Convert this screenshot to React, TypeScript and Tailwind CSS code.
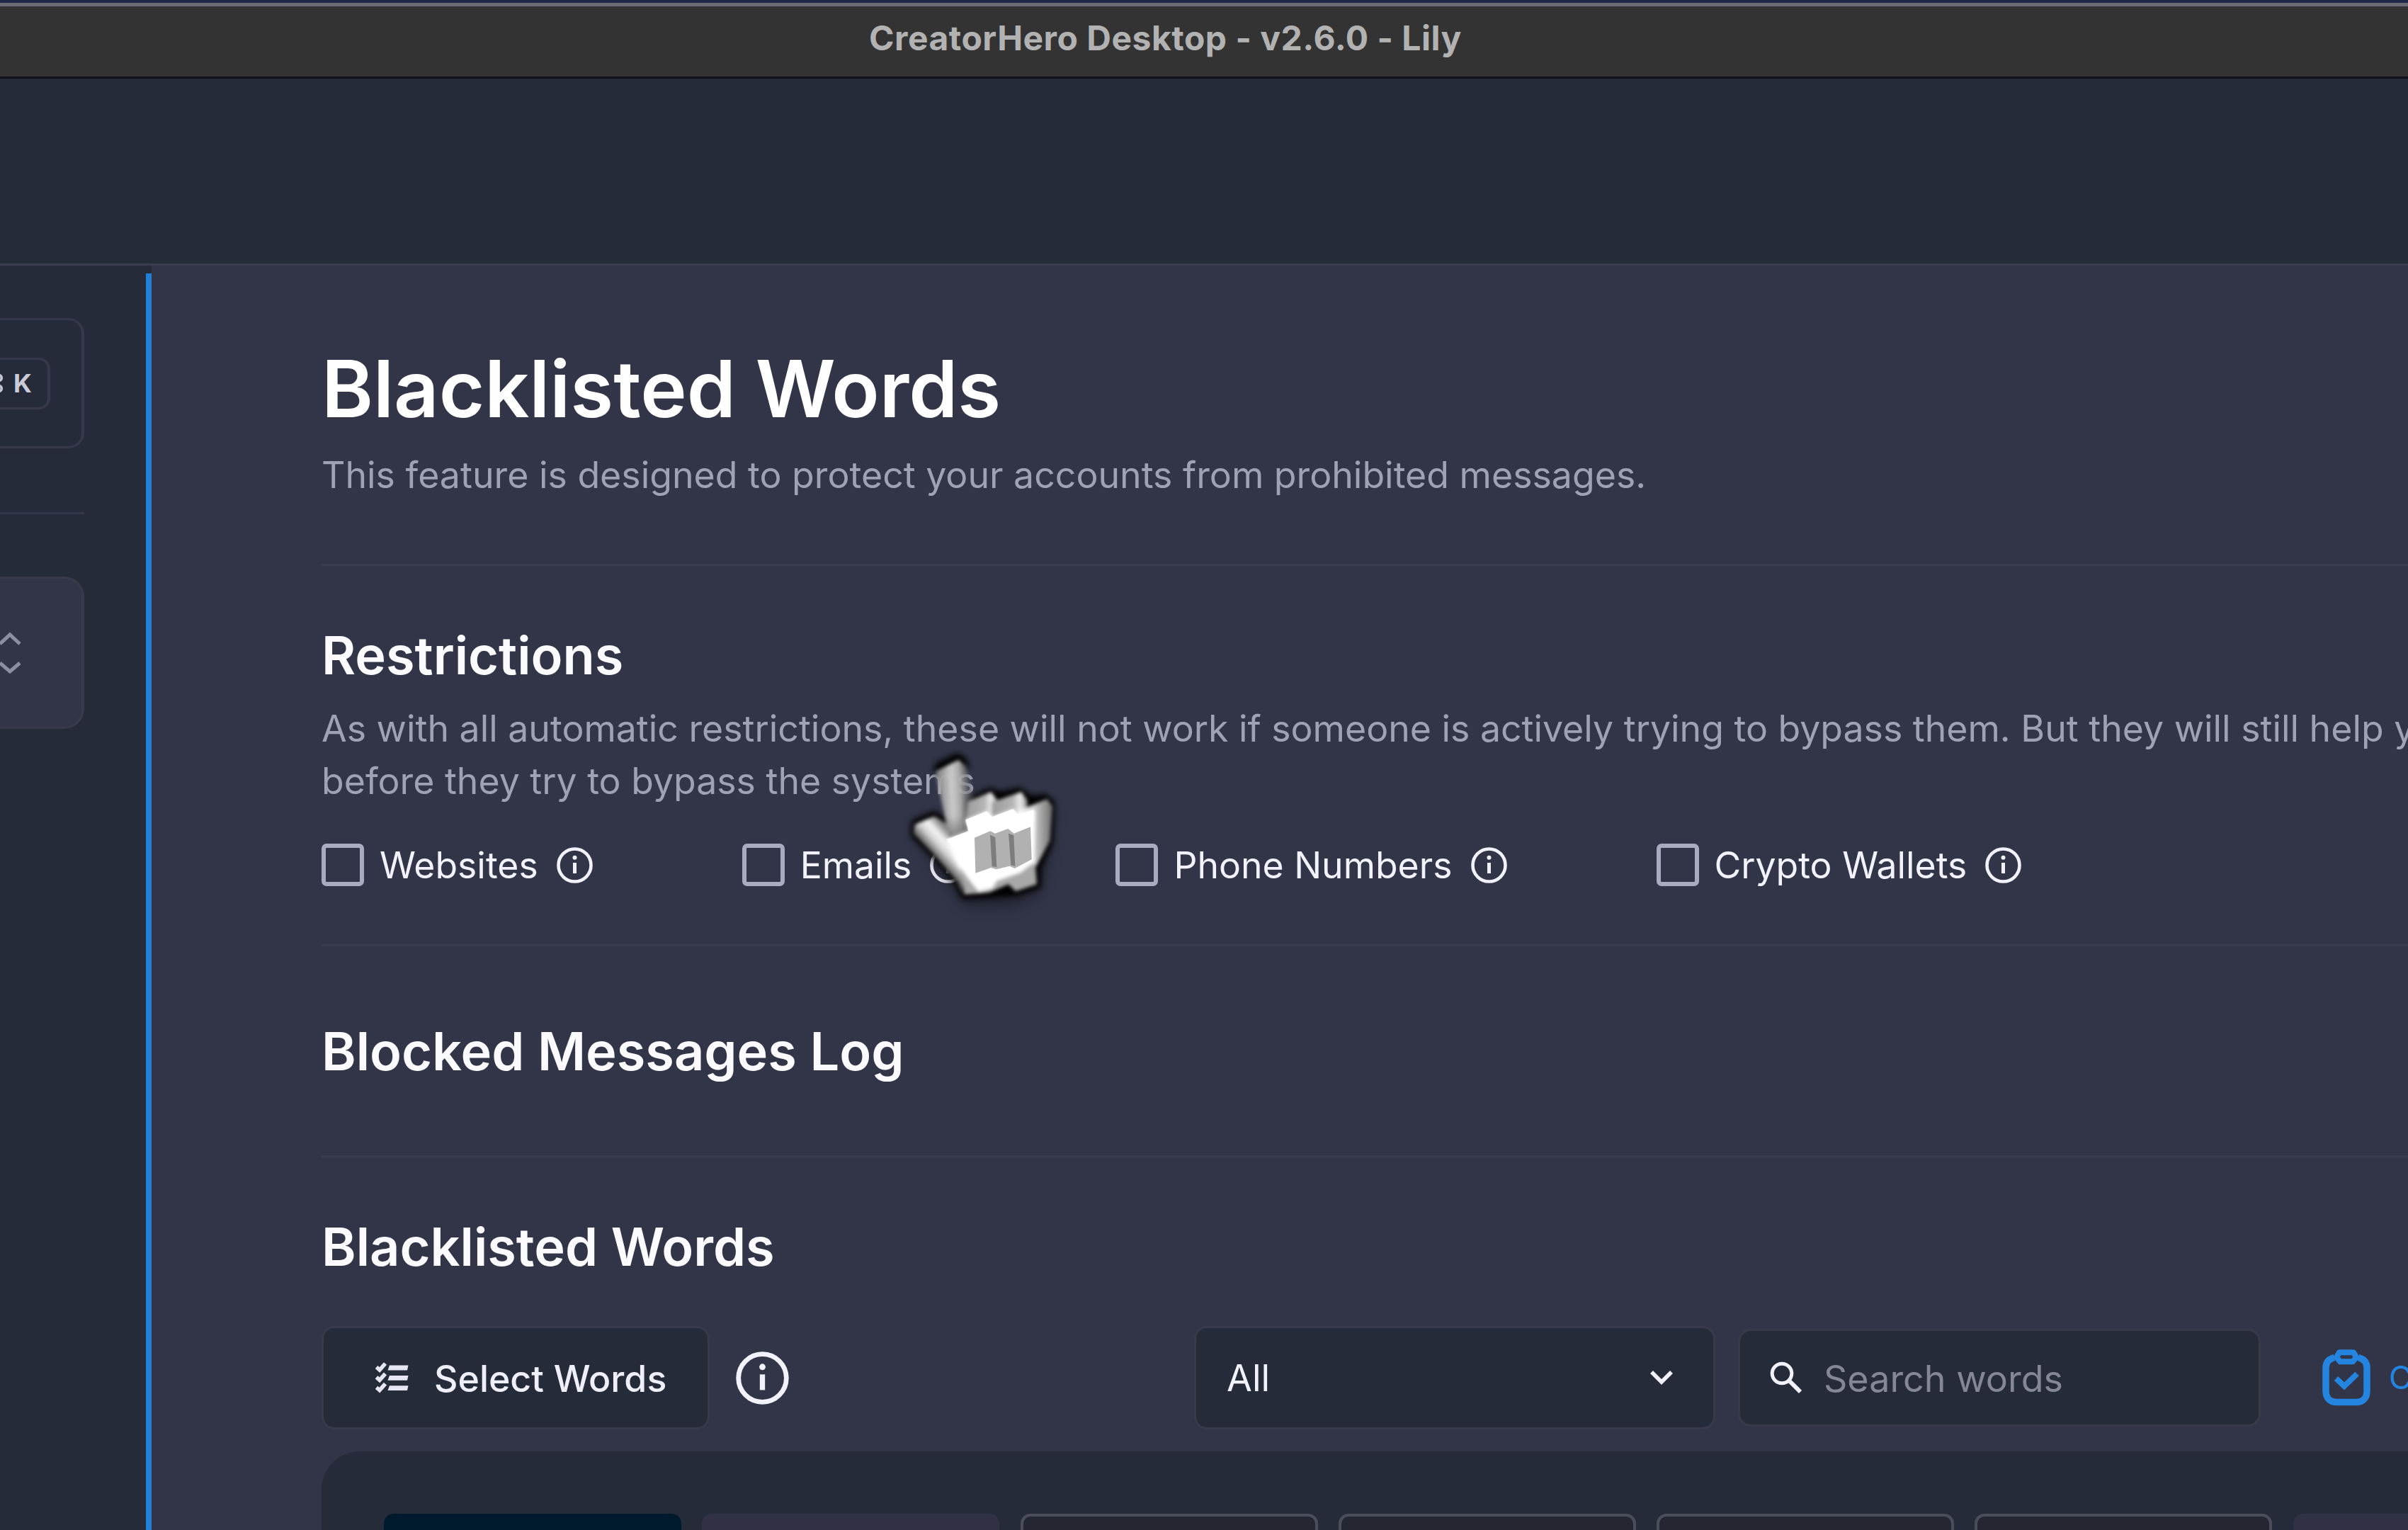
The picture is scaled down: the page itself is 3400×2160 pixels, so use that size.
import React from "react";
import { Command } from "lucide-react";
import { clsx } from "clsx";

interface IconProps {
  className?: string;
}

const restrictions = ["Websites", "Emails", "Phone Numbers", "Crypto Wallets"];

// one entry per word chip, only the top edge of the grid is in view
const chips = ["selected", "muted", "outlined", "outlined", "outlined", "outlined", "muted"];

const InfoIcon: React.FC<IconProps> = ({ className }) => (
  <svg viewBox="0 0 51 51" fill="none" className={clsx("shrink-0 text-[#f1f2fc]", className)}>
    <circle cx="25.5" cy="25.5" r="23" stroke="currentColor" strokeWidth="4.6" />
    <path d="M25.5 22v15" stroke="currentColor" strokeWidth="5" />
    <circle cx="25.5" cy="14.8" r="3" fill="currentColor" />
  </svg>
);

const ChecklistIcon: React.FC<IconProps> = ({ className }) => (
  <svg viewBox="0 0 47 44" fill="none" stroke="#e6e7f2" className={className}>
    {[8, 22.3, 36.7].map((y) => (
      <g key={y} transform={`translate(0 ${y})`}>
        <path d="M1.5 -1 6 3 14 -6" strokeWidth="5.5" />
        <path d="M20 -3.4H46.5L45 3.4H17.5Z" fill="#e6e7f2" stroke="none" />
      </g>
    ))}
  </svg>
);

const ClipboardIcon: React.FC<IconProps> = ({ className }) => (
  <svg viewBox="0 0 68 82" fill="none" stroke="#2385e0" strokeWidth="9.5" className={className}>
    <path d="M17 12.5C9.5 14.5 5 19 5 27V60C5 69.5 11 75.5 20 75.5H48C57 75.5 63 69.5 63 60V27C63 19 58.5 14.5 51 12.5" />
    <path d="M24 5.3H44L48 12 43 18.3H25L20 12Z" strokeWidth="8" strokeLinejoin="round" />
    <path d="M19.5 42 31 53 49 35.5" strokeWidth="8" />
  </svg>
);

const Cursor: React.FC = () => (
  <svg
    viewBox="0 0 900 840"
    className="absolute left-[1240px] top-[1030px] w-[300px] h-[280px] overflow-visible"
  >
    <defs>
      <linearGradient id="finger" x1="0" x2="1" y1="0.1" y2="0">
        <stop offset="0" stopColor="#8e8e8e" stopOpacity="0.85" />
        <stop offset="0.4" stopColor="#cccccc" />
        <stop offset="0.62" stopColor="#adadad" stopOpacity="0.95" />
        <stop offset="0.85" stopColor="#6a6a6a" stopOpacity="0.5" />
        <stop offset="1" stopColor="#4a4a4a" stopOpacity="0.1" />
      </linearGradient>
      <linearGradient id="fingerBase" x1="0" x2="0" y1="0" y2="1">
        <stop offset="0.55" stopColor="#444" stopOpacity="0" />
        <stop offset="1" stopColor="#555" stopOpacity="0.65" />
      </linearGradient>
      <linearGradient id="thumb" gradientUnits="userSpaceOnUse" x1="190" y1="510" x2="290" y2="420">
        <stop offset="0" stopColor="#4c4c4c" stopOpacity="0.7" />
        <stop offset="0.45" stopColor="#d2d2d2" />
        <stop offset="0.7" stopColor="#f4f4f4" />
        <stop offset="1" stopColor="#7d7d7d" />
      </linearGradient>
      <linearGradient id="side" x1="0" x2="1" y1="0" y2="0">
        <stop offset="0" stopColor="#fff" />
        <stop offset="0.4" stopColor="#d6d6d6" />
        <stop offset="1" stopColor="#6c6c6c" />
      </linearGradient>
      <linearGradient id="knuckle" x1="0" x2="1" y1="0" y2="0">
        <stop offset="0" stopColor="#9b9b9b" />
        <stop offset="0.6" stopColor="#b5b5b5" />
        <stop offset="0.8" stopColor="#eeeeee" />
        <stop offset="1" stopColor="#8a8a8a" />
      </linearGradient>
      <filter id="soft">
        <feGaussianBlur stdDeviation="8" />
      </filter>
      <filter id="shade" x="-30%" y="-30%" width="160%" height="160%">
        <feGaussianBlur stdDeviation="13" />
      </filter>
      <filter id="drop" x="-30%" y="-30%" width="160%" height="160%">
        <feGaussianBlur stdDeviation="30" />
      </filter>
    </defs>

    {/* shadow under the hand */}
    <path
      d="M150 420 250 370 340 470 460 380 740 330 728 500 680 700 560 750 370 750 230 560Z"
      fill="#000"
      opacity="0.35"
      filter="url(#drop)"
    />
    <g fill="#000" filter="url(#shade)">
      <path d="M232 180 245 140 335 98 372 120 390 165 340 160 260 200Z" />
      <path d="M380 290 470 246 520 262 600 244 650 280 710 272 748 305 740 480 690 585 690 670 580 705 470 712 355 718 325 650 220 530 138 450 142 385 235 345 300 380Z" />
    </g>

    <g filter="url(#soft)">
      <path d="M150 440 155 402 238 367 292 400 380 420 355 700 336 645 228 520Z" fill="url(#thumb)" />
      <path d="M242 178 340 128 372 155 404 280 400 430 300 460 288 395Z" fill="url(#finger)" />
      <path d="M260 250 380 250 400 430 300 460 288 395Z" fill="url(#fingerBase)" />
      <path d="M380 305 478 264 506 300 500 400 370 400Z" fill="url(#knuckle)" />
      <path d="M480 308 606 264 632 300 625 400 480 400Z" fill="url(#knuckle)" />
      <path d="M592 345 715 294 738 325 728 470 668 580 630 600Z" fill="url(#side)" />
      <path d="M350 590 640 560 665 575 672 655 582 685 552 655 470 690 365 698Z" fill="#a8a8a8" />
    </g>
    <path
      d="M288 466 382 430 370 382 460 346 482 370 572 336 592 360 665 340 662 560 604 606 502 642 484 672 425 686 395 650 335 570Z"
      fill="#fff"
      filter="url(#soft)"
    />
    <path d="M288 466 382 430 370 382 460 346 482 370 572 336 592 360 660 340 640 560 420 610Z" fill="#fff" />
    <path d="M408 458 475 430 495 440 550 420 575 440 645 412 650 550 578 588 556 578 500 592 478 585 412 608Z" fill="#b1b1b1" />
    <path d="M474 446 496 456 502 582 482 580Z" fill="#7d7d7d" />
    <path d="M552 440 574 448 580 578 562 574Z" fill="#7d7d7d" />
  </svg>
);

const Sidebar: React.FC = () => (
  <aside className="w-[206px] shrink-0 pt-[74px] pr-[87px] overflow-hidden">
    <div className="-ml-[60px] h-[184px] flex items-center justify-end pr-[44px] rounded-[22px] border-x-4 border-y-[3px] border-[#363849]">
      <div className="w-[140px] h-[73px] flex items-center justify-end pr-[22px] rounded-2xl border-x-4 border-y-[3px] border-[#363849]">
        <Command className="w-[30px] h-[30px] mr-[13px] text-[#c3c5d3]" strokeWidth={3} />
        <span className="text-[36px] leading-[48px] font-bold text-[#c9cbd8]">K</span>
      </div>
    </div>
    <div className="mt-[90px] h-[3px] bg-[#363849]" />
    <div className="-ml-[60px] mt-[88px] h-[215px] flex items-center justify-end pr-[84px] rounded-[28px] border-x-4 border-y-[3px] border-[#38394b] bg-[#323548]">
      <svg viewBox="0 0 34 62" fill="none" stroke="#8d8fa0" strokeWidth="5" className="w-[34px] h-[62px]">
        <path d="M3 18 17 5 31 18" />
        <path d="M3 45 17 57 31 45" />
      </svg>
    </div>
  </aside>
);

const Restriction: React.FC<{ label: string }> = ({ label }) => (
  <div className="flex flex-row items-center whitespace-nowrap">
    <span className="w-[60px] h-[60px] rounded-[7px] border-[6px] border-[#a9abc0]" />
    <span className="ml-[22px] text-[51.7px] leading-[60px] text-[#f1f2fc]">{label}</span>
    <InfoIcon className="ml-[26px] w-[51px] h-[51px]" />
  </div>
);

const Toolbar: React.FC = () => (
  <div className="mt-[67px] h-[146px] flex items-center whitespace-nowrap">
    <button className="w-[548px] h-[146px] shrink-0 flex items-center pl-[73px] rounded-[18px] border-[3px] border-[#38394b] bg-[#262b39]">
      <ChecklistIcon className="w-[47px] h-[44px]" />
      <span className="ml-[36px] pt-px text-[51.8px] leading-[64px] font-medium text-[#eeeff9]">Select Words</span>
    </button>
    <InfoIcon className="ml-[37px] w-[75px] h-[75px]" />
    <div className="ml-[572px] w-[736px] h-[146px] shrink-0 flex items-center justify-between pl-[43px] pr-[56px] rounded-[18px] border-[3px] border-[#38394b] bg-[#262b39]">
      <span className="pt-px text-[52px] leading-[64px] text-[#f1f2fc]">All</span>
      <svg viewBox="0 0 34 22" fill="none" stroke="#f1f2fc" strokeWidth="5.5" className="w-[34px] h-[22px]">
        <path d="M3 3 17 17 31 3" />
      </svg>
    </div>
    <div className="ml-[32px] w-[738px] h-[138px] shrink-0 flex items-center pl-[42px] rounded-[18px] border-[3px] border-[#38394b] bg-[#262b39]">
      <svg viewBox="0 0 46 46" fill="none" stroke="#f1f2fc" className="w-[46px] h-[46px]">
        <circle cx="17" cy="17" r="13.8" strokeWidth="5" />
        <path d="M26.5 26.5 43 43" strokeWidth="6" />
      </svg>
      <span className="ml-[30px] pt-[4px] text-[52px] leading-[64px] text-[#858796]">Search words</span>
    </div>
    <ClipboardIcon className="ml-[87px] w-[68px] h-[82px] shrink-0" />
    <span className="ml-[26px] text-[45px] leading-[60px] text-[#2385e0]">Copy</span>
  </div>
);

const App: React.FC = () => {
  return (
    <div className="relative w-[3400px] h-[2160px] overflow-hidden flex flex-col bg-[#262b39] font-['Inter',sans-serif]">
      <div className="h-[4px] shrink-0 bg-[#1d2748]" />
      <div className="h-[107px] shrink-0 border-t-[5px] border-t-[#696a73] border-b-[3px] border-b-[#11131c] bg-[#333333] pl-[1227px]">
        <span className="block text-[48px] leading-[90px] tracking-[0.5px] font-bold text-[#b2b2b2]">
          CreatorHero Desktop - v2.6.0 - Lily
        </span>
      </div>
      <header className="h-[264px] shrink-0 border-b-[3px] border-[#3b3c4f]" />

      <div className="flex flex-1 min-h-0">
        <Sidebar />
        <div className="mt-[11px] w-[8px] shrink-0 bg-[#2380d8]" />

        <main className="flex-1 min-w-0 pt-[107px] pl-[240px] overflow-hidden bg-[#323548]">
          <h1 className="text-[110.8px] leading-[134px] font-semibold text-white">Blacklisted Words</h1>
          <p className="mt-[18px] text-[51.8px] leading-[72px] text-[#a0a1b3]">
            This feature is designed to protect your accounts from prohibited messages.
          </p>
          <div className="mt-[90px] h-[3px] bg-[#3a3c4f]" />

          <h2 className="mt-[81px] text-[73.9px] leading-[90px] font-semibold text-[#fafaff]">Restrictions</h2>
          <p className="mt-[22px] text-[51.78px] leading-[73.5px] text-[#a0a1b3] whitespace-nowrap">
            As with all automatic restrictions, these will not work if someone is actively trying to bypass them. But they will still help you
            <br />
            before they try to bypass the systems
          </p>
          <div className="mt-[52px] h-[60px] flex flex-row items-center gap-[211px]">
            {restrictions.map((label) => (
              <Restriction key={label} label={label} />
            ))}
          </div>
          <div className="mt-[82px] h-[3px] bg-[#3a3b4e]" />

          <h2 className="mt-[103px] text-[73.9px] leading-[90px] font-semibold text-[#fafaff]">Blocked Messages Log</h2>
          <div className="mt-[102px] h-[3px] bg-[#3a3b4e]" />

          <h2 className="mt-[81px] text-[73.9px] leading-[90px] font-semibold text-[#fafaff]">Blacklisted Words</h2>
          <Toolbar />

          <div className="mt-[31px] h-[300px] flex gap-[29.3px] pt-[88px] pl-[88px] rounded-tl-[54px] bg-[#262b39]">
            {chips.map((kind, index) => (
              <div
                key={index}
                className={clsx("w-[420px] h-[140px] shrink-0 rounded-[14px]", {
                  "bg-[#001a2d]": kind === "selected",
                  "bg-[#303142]": kind === "muted",
                  "border-4 border-[#4b4d5c] bg-[#242632]": kind === "outlined",
                })}
              />
            ))}
          </div>
        </main>
      </div>

      <Cursor />
    </div>
  );
};

export default App;
